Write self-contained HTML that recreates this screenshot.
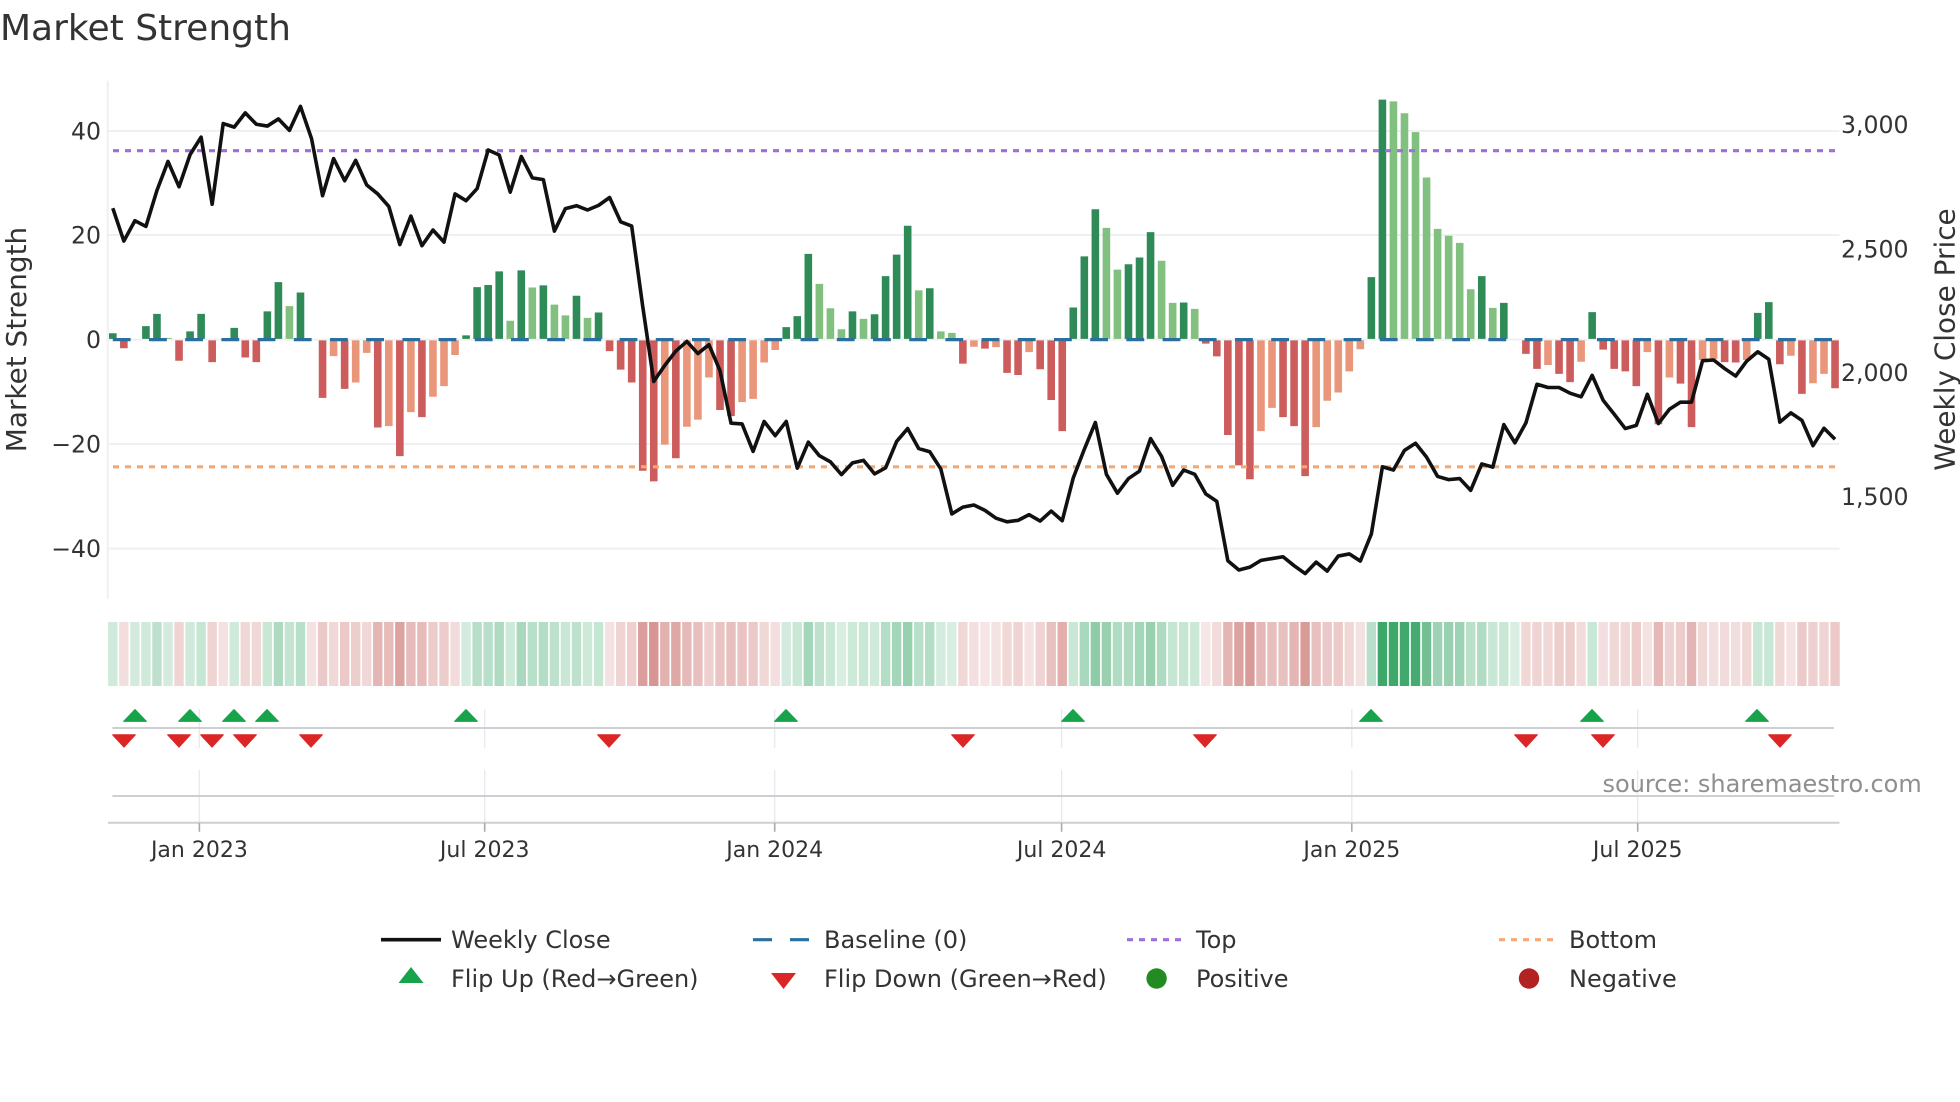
<!DOCTYPE html>
<html><head><meta charset="utf-8"><title>Market Strength</title>
<style>
html,body{margin:0;padding:0;background:#fff;width:1960px;height:1102px;overflow:hidden}
svg{display:block}
text{font-family:"DejaVu Sans","Liberation Sans",sans-serif;fill:#333}
.s path,.s polyline{vector-effect:non-scaling-stroke}
.g path{stroke:#16964c;stroke-width:9.4;fill:none}
.r path{stroke:#b8403c;stroke-width:9.4;fill:none}
.g{opacity:.92}
.t{font-size:22px}
.y{font-size:23.6px}
.l{font-size:24px}
.a{font-size:27.9px}
</style></head><body>
<svg width="1960" height="1102" viewBox="0 0 1960 1102" xmlns="http://www.w3.org/2000/svg">
<text x="0" y="40" style="font-size:36px">Market Strength</text>

<!-- grid -->
<g stroke="#eef0f3" stroke-width="2" fill="none">
<path d="M107.7 80.7V599"/>
<path d="M108 131H1839.5M108 235H1839.5M108 339.6H1839.5M108 444H1839.5M108 548.6H1839.5"/>
</g>

<!-- bars -->
<g class="s" transform="translate(112.8,60) scale(11.04,.35714)" fill="none" stroke-width="7.6">
<path stroke="#2e8b57" d="M0 781V765M3 781V745M4 781V711M7 781V760M8 781V711M11 781V750M14 781V704M15 781V622M17 781V651M32 781V771M33 781V636M34 781V630M35 781V592M37 781V589M39 781V631M42 781V660M44 781V707M61 781V748M62 781V717M63 781V543M67 781V704M69 781V712M70 781V605M71 781V545M72 781V464M74 781V639M87 781V693M88 781V550M89 781V418M92 781V572M93 781V553M94 781V482M97 781V679M114 781V608M115 781V111M124 781V605M126 781V680M134 781V706M149 781V708M150 781V678"/>
<path stroke="#81c07f" d="M5 781V778M16 781V689M36 781V730M38 781V637M40 781V685M41 781V715M43 781V722M64 781V627M65 781V695M66 781V754M68 781V725M73 781V645M75 781V760M76 781V764M90 781V470M91 781V587M95 781V562M96 781V680M98 781V697M116 781V116M117 781V149M118 781V202M119 781V329M120 781V473M121 781V492M122 781V512M123 781V642M125 781V694"/>
<path stroke="#cd5c5c" d="M1 785V807M6 785V842M9 785V846M12 785V833M13 785V846M19 785V946M21 785V921M24 785V1029M26 785V1109M28 785V1000M45 785V815M46 785V867M47 785V903M48 785V1150M49 785V1180M51 785V1115M55 785V980M56 785V997M77 785V850M79 785V808M81 785V876M82 785V882M84 785V866M85 785V952M86 785V1039M99 785V794M100 785V830M101 785V1050M102 785V1135M103 785V1174M106 785V1000M107 785V1025M108 785V1165M128 785V823M129 785V865M131 785V879M132 785V902M135 785V811M136 785V865M137 785V872M138 785V913M140 785V1020M142 785V906M143 785V1028M146 785V846M147 785V847M151 785V852M153 785V935M156 785V919"/>
<path stroke="#e9967a" d="M20 785V829M22 785V903M23 785V820M25 785V1025M27 785V986M29 785V943M30 785V913M31 785V826M50 785V1077M52 785V1027M53 785V1007M54 785V889M57 785V958M58 785V949M59 785V847M60 785V812M78 785V803M80 785V804M83 785V818M104 785V1039M105 785V974M109 785V1028M110 785V954M111 785V931M112 785V872M113 785V810M130 785V854M133 785V845M139 785V818M141 785V889M144 785V840M145 785V838M148 785V840M152 785V828M154 785V905M155 785V879"/>
</g>

<!-- reference lines -->
<path d="M113 150.7H1835" stroke="#a06fd8" stroke-width="3.2" stroke-dasharray="6 6" fill="none"/>
<path d="M113 466.8H1835" stroke="#f4a974" stroke-width="3.2" stroke-dasharray="6 6" fill="none"/>
<path d="M112.8 339.6H1835" stroke="#2a6f9e" stroke-width="3.2" stroke-dasharray="17.8 18.4" fill="none"/>

<!-- close -->
<g class="s" transform="translate(112.8,60) scale(11.04,.35714)">
<polyline fill="none" stroke="#111" stroke-width="3.6" stroke-linejoin="round" points="0,415 1,507 2,450 3,466 4,365 5,284 6,355 7,265 8,216 9,404 10,178 11,188 12,148 13,180 14,185 15,165 16,197 17,130 18,220 19,380 20,276 21,338 22,281 23,350 24,375 25,410 26,517 27,437 28,520 29,476 30,510 31,375 32,394 33,360 34,252 35,266 36,370 37,270 38,330 39,335 40,479 41,416 42,408 43,420 44,407 45,385 46,453 47,465 48,690 49,900 50,855 51,815 52,788 53,822 54,797 55,870 56,1017 57,1019 58,1096 59,1012 60,1052 61,1012 62,1143 63,1070 64,1108 65,1125 66,1161 67,1128 68,1121 69,1159 70,1142 71,1068 72,1032 73,1088 74,1097 75,1145 76,1271 77,1252 78,1246 79,1261 80,1283 81,1293 82,1289 83,1273 84,1291 85,1263 86,1290 87,1170 88,1090 89,1015 90,1160 91,1213 92,1172 93,1151 94,1060 95,1110 96,1191 97,1148 98,1160 99,1215 100,1236 101,1402 102,1428 103,1420 104,1401 105,1396 106,1391 107,1416 108,1438 109,1406 110,1431 111,1389 112,1383 113,1403 114,1327 115,1139 116,1148 117,1093 118,1073 119,1112 120,1166 121,1175 122,1172 123,1205 124,1131 125,1140 126,1021 127,1072 128,1016 129,908 130,917 131,917 132,933 133,943 134,883 135,953 136,992 137,1032 138,1023 139,936 140,1018 141,978 142,958 143,958 144,842 145,840 146,864 147,885 148,843 149,817 150,838 151,1014 152,988 153,1009 154,1080 155,1031 156,1062"/>
</g>

<!-- axis tick labels -->
<g class="y" text-anchor="end">
<text x="101" y="139.4">40</text>
<text x="101" y="243.4">20</text>
<text x="101" y="348">0</text>
<text x="101" y="452.4">−20</text>
<text x="101" y="557">−40</text>
</g>
<g class="y">
<text x="1841" y="133">3,000</text>
<text x="1841" y="257.3">2,500</text>
<text x="1841" y="381.2">2,000</text>
<text x="1841" y="505.1">1,500</text>
</g>
<text class="a" transform="translate(26,339.5) rotate(-90)" text-anchor="middle">Market Strength</text>
<text class="a" transform="translate(1954.5,339.5) rotate(-90)" text-anchor="middle">Weekly Close Price</text>

<!-- heat strip -->
<g class="s" transform="translate(112.8,622) scale(11.04,1)">
<g class="g">
<path opacity=".22" d="M0 0v64"/><path opacity=".2" d="M2 0v64"/><path opacity=".22" d="M3 0v64"/><path opacity=".3" d="M4 0v64"/><path opacity=".2" d="M5 0v64"/><path opacity=".22" d="M7 0v64"/><path opacity=".27" d="M8 0v64"/><path opacity=".22" d="M11 0v64"/><path opacity=".25" d="M14 0v64"/><path opacity=".38" d="M15 0v64"/><path opacity=".28" d="M16 0v64"/><path opacity=".33" d="M17 0v64"/>
<path opacity=".2" d="M32 0v64"/><path opacity=".33" d="M33 0v64"/><path opacity=".33" d="M34 0v64"/><path opacity=".38" d="M35 0v64"/><path opacity=".23" d="M36 0v64"/><path opacity=".4" d="M37 0v64"/><path opacity=".33" d="M38 0v64"/><path opacity=".35" d="M39 0v64"/><path opacity=".3" d="M40 0v64"/><path opacity=".25" d="M41 0v64"/><path opacity=".3" d="M42 0v64"/><path opacity=".23" d="M43 0v64"/><path opacity=".27" d="M44 0v64"/>
<path opacity=".2" d="M61 0v64"/><path opacity=".24" d="M62 0v64"/><path opacity=".42" d="M63 0v64"/><path opacity=".3" d="M64 0v64"/><path opacity=".25" d="M65 0v64"/><path opacity=".18" d="M66 0v64"/><path opacity=".23" d="M67 0v64"/><path opacity=".25" d="M68 0v64"/><path opacity=".22" d="M69 0v64"/><path opacity=".35" d="M70 0v64"/><path opacity=".42" d="M71 0v64"/><path opacity=".48" d="M72 0v64"/><path opacity=".33" d="M73 0v64"/><path opacity=".35" d="M74 0v64"/><path opacity=".2" d="M75 0v64"/><path opacity=".18" d="M76 0v64"/>
<path opacity=".25" d="M87 0v64"/><path opacity=".4" d="M88 0v64"/><path opacity=".52" d="M89 0v64"/><path opacity=".47" d="M90 0v64"/><path opacity=".36" d="M91 0v64"/><path opacity=".38" d="M92 0v64"/><path opacity=".42" d="M93 0v64"/><path opacity=".47" d="M94 0v64"/><path opacity=".38" d="M95 0v64"/><path opacity=".27" d="M96 0v64"/><path opacity=".26" d="M97 0v64"/><path opacity=".24" d="M98 0v64"/>
<path opacity=".33" d="M114 0v64"/><path opacity=".9" d="M115 0v64"/><path opacity=".9" d="M116 0v64"/><path opacity=".88" d="M117 0v64"/><path opacity=".86" d="M118 0v64"/><path opacity=".65" d="M119 0v64"/><path opacity=".45" d="M120 0v64"/><path opacity=".47" d="M121 0v64"/><path opacity=".45" d="M122 0v64"/><path opacity=".32" d="M123 0v64"/><path opacity=".36" d="M124 0v64"/><path opacity=".25" d="M125 0v64"/><path opacity=".25" d="M126 0v64"/><path opacity=".17" d="M127 0v64"/>
<path opacity=".25" d="M134 0v64"/><path opacity=".25" d="M149 0v64"/><path opacity=".25" d="M150 0v64"/>
</g>
<g class="r">
<path opacity=".17" d="M1 0v64"/><path opacity=".22" d="M6 0v64"/><path opacity=".22" d="M9 0v64"/><path opacity=".15" d="M10 0v64"/><path opacity=".2" d="M12 0v64"/><path opacity=".2" d="M13 0v64"/>
<path opacity=".15" d="M18 0v64"/><path opacity=".28" d="M19 0v64"/><path opacity=".2" d="M20 0v64"/><path opacity=".28" d="M21 0v64"/><path opacity=".25" d="M22 0v64"/><path opacity=".2" d="M23 0v64"/><path opacity=".38" d="M24 0v64"/><path opacity=".35" d="M25 0v64"/><path opacity=".48" d="M26 0v64"/><path opacity=".35" d="M27 0v64"/><path opacity=".35" d="M28 0v64"/><path opacity=".26" d="M29 0v64"/><path opacity=".26" d="M30 0v64"/><path opacity=".18" d="M31 0v64"/>
<path opacity=".15" d="M45 0v64"/><path opacity=".22" d="M46 0v64"/><path opacity=".24" d="M47 0v64"/><path opacity=".5" d="M48 0v64"/><path opacity=".55" d="M49 0v64"/><path opacity=".4" d="M50 0v64"/><path opacity=".45" d="M51 0v64"/><path opacity=".36" d="M52 0v64"/><path opacity=".33" d="M53 0v64"/><path opacity=".24" d="M54 0v64"/><path opacity=".3" d="M55 0v64"/><path opacity=".33" d="M56 0v64"/><path opacity=".3" d="M57 0v64"/><path opacity=".28" d="M58 0v64"/><path opacity=".2" d="M59 0v64"/><path opacity=".16" d="M60 0v64"/>
<path opacity=".2" d="M77 0v64"/><path opacity=".16" d="M78 0v64"/><path opacity=".13" d="M79 0v64"/><path opacity=".14" d="M80 0v64"/><path opacity=".2" d="M81 0v64"/><path opacity=".22" d="M82 0v64"/><path opacity=".14" d="M83 0v64"/><path opacity=".22" d="M84 0v64"/><path opacity=".32" d="M85 0v64"/><path opacity=".42" d="M86 0v64"/>
<path opacity=".12" d="M99 0v64"/><path opacity=".18" d="M100 0v64"/><path opacity=".38" d="M101 0v64"/><path opacity=".48" d="M102 0v64"/><path opacity=".52" d="M103 0v64"/><path opacity=".37" d="M104 0v64"/><path opacity=".33" d="M105 0v64"/><path opacity=".32" d="M106 0v64"/><path opacity=".38" d="M107 0v64"/><path opacity=".52" d="M108 0v64"/><path opacity=".32" d="M109 0v64"/><path opacity=".28" d="M110 0v64"/><path opacity=".27" d="M111 0v64"/><path opacity=".2" d="M112 0v64"/><path opacity=".15" d="M113 0v64"/>
<path opacity=".2" d="M128 0v64"/><path opacity=".22" d="M129 0v64"/><path opacity=".2" d="M130 0v64"/><path opacity=".25" d="M131 0v64"/><path opacity=".25" d="M132 0v64"/><path opacity=".18" d="M133 0v64"/><path opacity=".16" d="M135 0v64"/><path opacity=".2" d="M136 0v64"/><path opacity=".2" d="M137 0v64"/><path opacity=".26" d="M138 0v64"/><path opacity=".15" d="M139 0v64"/><path opacity=".36" d="M140 0v64"/><path opacity=".23" d="M141 0v64"/><path opacity=".26" d="M142 0v64"/><path opacity=".38" d="M143 0v64"/><path opacity=".2" d="M144 0v64"/><path opacity=".16" d="M145 0v64"/><path opacity=".18" d="M146 0v64"/><path opacity=".17" d="M147 0v64"/><path opacity=".2" d="M148 0v64"/>
<path opacity=".2" d="M151 0v64"/><path opacity=".14" d="M152 0v64"/><path opacity=".27" d="M153 0v64"/><path opacity=".24" d="M154 0v64"/><path opacity=".22" d="M155 0v64"/><path opacity=".27" d="M156 0v64"/>
</g>
</g>

<!-- lower panels -->
<g stroke="#e6e9ee" stroke-width="1.3" fill="none">
<path d="M199.4 709V747.7M199.4 770V822M484.7 709V747.7M484.7 770V822M774.7 709V747.7M774.7 770V822M1061.6 709V747.7M1061.6 770V822M1351.8 709V747.7M1351.8 770V822M1637.7 709V747.7M1637.7 770V822"/>
</g>
<g stroke="#cdcfd2" stroke-width="2" fill="none">
<path d="M112.4 728H1834M112.4 796H1834M108 822.7H1839.5"/>
</g>
<path d="M199.4 823V831.7M484.7 823V831.7M774.7 823V831.7M1061.6 823V831.7M1351.8 823V831.7M1637.7 823V831.7" stroke="#aaa" stroke-width="1.6" fill="none"/>

<!-- flip markers -->
<g fill="#16a34a" stroke="#16a34a" stroke-width="1" stroke-linejoin="round">
<path d="M135 709.5L146.4 721.4H123.6Z"/><path d="M190 709.5L201.4 721.4H178.6Z"/><path d="M234 709.5L245.4 721.4H222.6Z"/><path d="M267 709.5L278.4 721.4H255.6Z"/><path d="M466 709.5L477.4 721.4H454.6Z"/><path d="M786 709.5L797.4 721.4H774.6Z"/><path d="M1073 709.5L1084.4 721.4H1061.6Z"/><path d="M1371 709.5L1382.4 721.4H1359.6Z"/><path d="M1592 709.5L1603.4 721.4H1580.6Z"/><path d="M1757 709.5L1768.4 721.4H1745.6Z"/>
</g>
<g fill="#dc2626" stroke="#dc2626" stroke-width="1" stroke-linejoin="round">
<path d="M124 747.2L135.4 734.8H112.6Z"/><path d="M179 747.2L190.4 734.8H167.6Z"/><path d="M212 747.2L223.4 734.8H200.6Z"/><path d="M245 747.2L256.4 734.8H233.6Z"/><path d="M311 747.2L322.4 734.8H299.6Z"/><path d="M609 747.2L620.4 734.8H597.6Z"/><path d="M963 747.2L974.4 734.8H951.6Z"/><path d="M1205 747.2L1216.4 734.8H1193.6Z"/><path d="M1526 747.2L1537.4 734.8H1514.6Z"/><path d="M1603 747.2L1614.4 734.8H1591.6Z"/><path d="M1780 747.2L1791.4 734.8H1768.6Z"/>
</g>

<text x="1602.5" y="792" style="font-size:24px;fill:#8f8f8f">source: sharemaestro.com</text>

<!-- x labels -->
<g class="t" text-anchor="middle">
<text x="199.4" y="857">Jan 2023</text>
<text x="484.7" y="857">Jul 2023</text>
<text x="774.7" y="857">Jan 2024</text>
<text x="1061.6" y="857">Jul 2024</text>
<text x="1351.8" y="857">Jan 2025</text>
<text x="1637.7" y="857">Jul 2025</text>
</g>

<!-- legend -->
<path d="M381 939.7H441" stroke="#111" stroke-width="3.6" fill="none"/>
<path d="M753 939.7H772M790 939.7H809" stroke="#2a6f9e" stroke-width="3.2" fill="none"/>
<path d="M1127 939.7H1182" stroke="#a06fd8" stroke-width="3.2" stroke-dasharray="6 6" fill="none"/>
<path d="M1499 939.7H1554" stroke="#f4a974" stroke-width="3.2" stroke-dasharray="6 6" fill="none"/>
<path d="M411 967L423.5 983H398.5Z" fill="#16a34a"/>
<path d="M783.5 989L796 973H771Z" fill="#dc2626"/>
<circle cx="1156.6" cy="978.5" r="10.2" fill="#228b22"/>
<circle cx="1529" cy="978.5" r="10.2" fill="#b22222"/>
<g class="l">
<text x="451" y="948">Weekly Close</text>
<text x="824" y="948">Baseline (0)</text>
<text x="1196" y="948">Top</text>
<text x="1569" y="948">Bottom</text>
<text x="451" y="987">Flip Up (Red→Green)</text>
<text x="824" y="987">Flip Down (Green→Red)</text>
<text x="1196" y="987">Positive</text>
<text x="1569" y="987">Negative</text>
</g>
</svg>
</body></html>
